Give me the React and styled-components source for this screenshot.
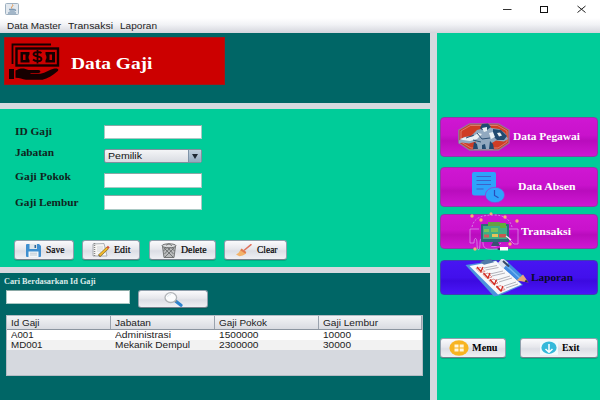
import React, { useLayoutEffect, useRef } from "react";
import styled, { createGlobalStyle } from "styled-components";

const Global = createGlobalStyle`
  * { box-sizing: border-box; }
  body { margin: 0; background: #fff; overflow: hidden; }
  svg { display: block; flex: none; }
`;

const serif = '"Liberation Serif", serif';
const sans = '"Liberation Sans", sans-serif';

/* ---------- text ---------- */
const Slot = styled.span`
  display: block;
  flex: none;
  width: ${(p) => p.$w}px;
  text-align: left;
  white-space: nowrap;
`;
const Glyphs = styled.span`
  display: inline-block;
  vertical-align: top;
  transform-origin: 0 50%;
`;

/* Stretches its text horizontally to the given width. */
function Text({ w, children, ...rest }) {
  const ref = useRef(null);
  useLayoutEffect(() => {
    const el = ref.current;
    const natural = parseFloat(getComputedStyle(el).width);
    el.style.transform = `scaleX(${w / natural})`;
  }, [w, children]);
  return (
    <Slot $w={w} {...rest}>
      <Glyphs ref={ref}>{children}</Glyphs>
    </Slot>
  );
}

/* ---------- frame ---------- */
const Window = styled.div`
  width: 600px;
  height: 400px;
  display: flex;
  flex-direction: column;
  background: #fff;
`;
const TitleBar = styled.header`
  height: 18px;
  display: flex;
  align-items: center;
  padding: 0 14px 0 5px;
`;
const WindowControls = styled.div`
  margin-left: auto;
  display: flex;
  align-items: center;
  gap: 28px;
`;
const MenuBar = styled.nav`
  height: 15px;
  display: flex;
  gap: 7px;
  padding: 1px 0 0 7px;
  font: 9px/15px ${sans};
  color: #222;
  background: linear-gradient(#fff, #f1f2f5 45%, #d3d5dc);
`;
const Body = styled.main`
  flex: 1;
  display: grid;
  grid-template-columns: 430px 163px;
  column-gap: 7px;
  background: #d6d9df;
`;
const Main = styled.div`
  display: grid;
  grid-template-rows: 70px 158px 127px;
  row-gap: 6px;
`;
const HeaderPanel = styled.section`
  background: #006666;
  padding: 4px 0 0 4px;
`;
const Banner = styled.div`
  width: 221px;
  height: 48px;
  display: flex;
  align-items: center;
  padding-left: 4px;
  background: #cc0000;
  border: 1px solid #a31616;
`;
const BannerTitle = styled(Text)`
  font: bold 16.5px/20px ${serif};
  color: #fff;
  margin: 5px 0 0 10.5px;
`;

/* ---------- form ---------- */
const FormPanel = styled.section`
  background: #00cc99;
  padding: 16px 0 0 15px;
`;
const Field = styled.label`
  display: flex;
  align-items: flex-start;
  height: ${(p) => p.$h}px;
`;
const FieldName = styled.span`
  width: 89px;
  margin-top: ${(p) => p.$top}px;
  font: bold 10px/12px ${serif};
  color: #10241d;
`;
const Input = styled.div`
  width: ${(p) => p.$w}px;
  height: ${(p) => p.$h}px;
  background: #fff;
  border: 1px solid #a9c9c4;
  border-top-color: #8aa8a5;
`;
const Combo = styled.div`
  width: 98px;
  height: 14px;
  display: flex;
  justify-content: space-between;
  padding-left: 3px;
  border: 1px solid #80909e;
  border-radius: 2px;
  background: linear-gradient(#f4f5f7, #d9dce2);
  font: 9px/13px ${sans};
  color: #111;
  overflow: hidden;
`;
const ComboArrow = styled.span`
  width: 13px;
  height: 12px;
  display: flex;
  align-items: center;
  justify-content: center;
  border-left: 1px solid #7e93a8;
  background: linear-gradient(#c1d0de, #93aabf);
`;
const Actions = styled.div`
  display: flex;
  margin: 31px 0 0 -1px;
`;

/* ---------- buttons ---------- */
const Button = styled.button`
  flex: none;
  display: flex;
  align-items: center;
  width: ${(p) => p.$w}px;
  height: ${(p) => p.$h || 20}px;
  margin: 0 ${(p) => p.$after || 0}px 0 0;
  padding: 0 0 0 ${(p) => p.$pad}px;
  border: 1px solid #8f9fac;
  border-bottom-color: #76808c;
  border-radius: 3px;
  background: linear-gradient(#fafafc, #e6e7ec 45%, #dcdee5 55%, #eff0f4);
  box-shadow: 0 1px 0 rgba(0, 70, 60, 0.25);
  font: ${(p) => (p.$bold ? "bold " : "")}10px/12px ${serif};
  color: #000;
`;
const ButtonText = styled(Text)`
  margin-left: ${(p) => p.$gap}px;
`;
const ActionText = styled(ButtonText)`
  -webkit-text-stroke: 0.2px #000;
`;

/* ---------- search & table ---------- */
const SearchPanel = styled.section`
  background: #006666;
  padding: 3px 0 0 4px;
`;
const SearchTitle = styled(Text)`
  font: bold 7.5px/11px ${serif};
  color: #dcebea;
`;
const SearchRow = styled.div`
  display: flex;
  gap: 8px;
  margin: 3px 0 0 2px;
`;
const Table = styled.div`
  width: 417px;
  height: 61px;
  margin: 7px 0 0 2px;
  border: 1px solid #b4bcc4;
  background: #d6d9df;
  font: 9px/11px ${sans};
  color: #1c1c1c;
`;
const TableRow = styled.div`
  display: grid;
  grid-template-columns: 104px 104px 104px 103px;
  height: 10px;
  background: ${(p) => (p.$alt ? "#f2f2f2" : "#fff")};
`;
const TableHead = styled(TableRow)`
  height: 14px;
  line-height: 15px;
  background: linear-gradient(#f3f4f6, #d9dbe1);
  border-bottom: 1px solid #8c95a0;
`;
const Cell = styled.div`
  height: 100%;
  padding-left: 4px;
`;
const HeadCell = styled(Cell)`
  height: 13px;
  border-right: 1px solid #9aa2ad;
`;

/* ---------- side navigation ---------- */
const Side = styled.aside`
  background: #00cc99;
  padding: 84px 0 0 2.5px;
`;
const NavButton = styled.button`
  display: flex;
  align-items: center;
  width: 158.5px;
  height: ${(p) => p.$h}px;
  margin: 0 0 ${(p) => p.$after}px;
  padding: 0 0 0 ${(p) => p.$pad}px;
  border: 1px solid ${(p) => (p.$blue ? "#3d3fb0" : "#8d3aa6")};
  border-radius: 4px;
  background: ${(p) =>
    p.$blue
      ? "linear-gradient(#4715f2, #4210ec 50%, #3c0ae0 60%, #4a16f8)"
      : "linear-gradient(#cf17d2, #c912cc 45%, #b90cbd 60%, #cf17d3)"};
  font: bold 10px/12px ${serif};
  color: ${(p) => (p.$blue ? "#0b0a2c" : "#fff")};
`;
const FootRow = styled.div`
  display: flex;
`;

/* ---------- drawings ---------- */
const JavaIcon = () => (
  <svg width="14" height="12" viewBox="0 0 14 12">
    <rect x="0.5" y="0.5" width="13" height="11" rx="1" fill="#e3e9ef" stroke="#9fb1c1" />
    <path d="M7.5 1.5c1.5 1.500-2 2-.7 4" stroke="#e08a3c" fill="none" />
    <path d="M4 6.300h5.500M4.500 8h4.500M3 10h8M9.500 6.500c2 0 1.500 1.500-.5 1.500" stroke="#56789a" fill="none" strokeWidth=".9" />
  </svg>
);
const MoneyHand = () => (
  <svg width="51" height="38" viewBox="0 0 51 38">
    <g fill="none" stroke="#160000">
      <path d="M3.500 22V2.500H42" strokeWidth="1.800" />
      <rect x="7.500" y="6.500" width="41.500" height="17" strokeWidth="2.400" />
    </g>
    <g fill="#160000">
      <path d="M11.500 10h9v2.200q-2 3 0 6v2.300h-9zM14 12.500v5.500h2.500v-5.500zM36.500 10h9.500v10.500h-9.500v-2.300q2-3 0-6zM40.500 12.500v5.500H43v-5.500z" fillRule="evenodd" />
      <rect x="0" y="27" width="5" height="10" />
      <path d="M6.500 28.500c5-3 9-2.500 13-.5h10c2.500 0 2.500 3 0 3h-8v.8h10c5-1 9-4 13-5 4-1 6 .5 4 2.500-5 4-10 7.500-15 8.500H17c-4-.5-6-2-10.500-2z" />
    </g>
    <path d="M32.500 11.200c-2-1.800-8-1.600-8 1.100s8 1.600 8 4.600-6 2.800-8.500.6M28.500 8v13.500" fill="none" stroke="#160000" strokeWidth="1.800" />
  </svg>
);
const Floppy = () => (
  <svg width="15" height="13" viewBox="0 0 15 13">
    <path d="M0 1q0-1 1-1h12l2 2v10q0 1-1 1H1q-1 0-1-1z" fill="#3f8fd0" />
    <path d="M3.500 0h7.500v5H3.500z" fill="#dfe6ea" />
    <path d="M8.500 1h1.600v3H8.500z" fill="#2b6699" />
    <path d="M2.500 7.500h10V13h-10z" fill="#f3f6f8" />
    <path d="M4 9.200h7M4 11h7" stroke="#a9b9c5" strokeWidth=".7" />
  </svg>
);
const Notepad = () => (
  <svg width="18" height="14" viewBox="0 0 18 14">
    <path d="M1 1l11-.5 3 12.500H1z" fill="#f5f5f3" stroke="#99a0a4" strokeWidth=".8" />
    <path d="M2.500 0v13" stroke="#888" strokeDasharray="1 1" strokeWidth="1.500" />
    <path d="M5 4h6M5 6h6M5 8h4" stroke="#c6cbd0" strokeWidth=".7" />
    <path d="M7 13L15.500 5" stroke="#5e5126" strokeWidth="3" />
    <path d="M7.500 12.500L15.500 5" stroke="#f1b92d" strokeWidth="2.200" />
    <path d="M15.300 5.200l1.500-1.500" stroke="#d45439" strokeWidth="2.500" />
  </svg>
);
const Bin = () => (
  <svg width="16" height="15" viewBox="0 0 16 15">
    <path d="M1.500 3.500h13l-1.500 11H3z" fill="#b9bbbc" stroke="#5d5f60" strokeWidth=".8" />
    <path d="M3 5l9 9M6 4l6.500 7M9.500 4l4 4M13 5l-9 9M10 4l-6.500 7M6.500 4l-4 4" stroke="#606365" strokeWidth=".8" />
    <ellipse cx="8" cy="2.800" rx="7" ry="2" fill="#dadcdd" stroke="#5d5f60" strokeWidth=".9" />
    <path d="M5 2.300l3-1.500 3 2" stroke="#666" fill="none" strokeWidth=".8" />
  </svg>
);
const Broom = () => (
  <svg width="16" height="13" viewBox="0 0 16 13">
    <path d="M8.500 6L15 .7" stroke="#e0705a" strokeWidth="1.500" strokeLinecap="round" />
    <path d="M4.500 6l5.500 3.500Q7.500 12 3.500 12.200L0 10.500Q3 9 4.500 6z" fill="#f3b36b" />
    <path d="M5.500 4.500l4.800 3.400-.8 1.800L4.200 6.200z" fill="#e27a4c" />
  </svg>
);
const Magnifier = () => (
  <svg width="19" height="15" viewBox="0 0 19 15">
    <path d="M11.500 9L17 13.300" stroke="#2d83cf" strokeWidth="3.200" strokeLinecap="round" />
    <path d="M10.500 8.500l2 1.500" stroke="#888" strokeWidth="1.500" />
    <ellipse cx="6.800" cy="5.600" rx="5.800" ry="4.900" fill="#fbfcfd" stroke="#b0b4b8" strokeWidth="1.300" />
    <path d="M3.500 5c.5-1.800 2-2.500 3.500-2.500" stroke="#dde6ee" fill="none" />
  </svg>
);
const Mechanic = () => (
  <svg width="52" height="28" viewBox="0 0 52 28">
    <path d="M11.500 .8h29L51 7v13l-10.500 7h-29L.8 20V7z" fill="#cf3d25" stroke="#8f7d96" strokeWidth="1.300" />
    <path d="M12.500 2.500h27L49 8v11l-9 6H13l-10-6V8z" fill="none" stroke="#e9b9ac" strokeWidth=".5" />
    <path d="M1 17.500l5-3.500 7-1 6-6 4-1 1-4 6-1 3 4 8 1 6 4 3 6-4 2.500-8-1-5 3 2 6h-19l2-8-7 2-7-1-3 1z" fill="#91a9c0" />
    <path d="M22 5l2-4 6-.5 3 3.500-4 3h-5zM35 6l8 1 6 6-3 4-7 0-4-4z" fill="#204a70" />
    <path d="M15 26l1-7 3 2 1 5zM24 26v-4l3-1 1 5zM31 26l1-8 3 3 1 5z" fill="#204a70" />
    <path d="M2 16l6-2h6l6-4 4 1-5 5-7 2-7-1zM24 5l5-1v4l-3 1zM31 10l4-1 2 5-4 2zM39 10l3-.5 2 3-3 1z" fill="#e9f1f4" />
    <path d="M19 10l5 6 8-1M15 17l8 2M8 15l8-3" stroke="#2c5174" fill="none" strokeWidth="1" />
  </svg>
);
const SheetClock = () => (
  <svg width="33" height="31" viewBox="0 0 33 31">
    <path d="M2 0h20q2 0 2 2v14q-8 .5-10 7.500H2.500q-2.500 0-2.500-2.500V2q0-2 2-2z" fill="#2ea3fb" />
    <path d="M4.500 4.500h14.500M4.500 8.500h14.500M4.500 12.500h14.500M4.500 17h7" stroke="#3c62c8" strokeWidth="1.100" />
    <ellipse cx="23" cy="23" rx="9.600" ry="7.700" fill="#2ea3fb" stroke="#a42fd0" strokeWidth=".7" />
    <path d="M22.500 18v5.500l4 2.300" stroke="#2a4cba" strokeWidth="1.200" fill="none" />
  </svg>
);
const Desktop = () => (
  <svg width="50" height="40" viewBox="0 0 50 40">
    <g fill="none" stroke="#d795e6" strokeWidth=".8">
      <path d="M3 15C5 5 14 3 25 3s16 5 18 12" strokeDasharray="2 1.500" />
      <path d="M10 17H1v14h4c0-6 3-6 3 0 0 9 3 9 3 0 0-6 3-6 3 0 0 8 8 6 14 6" />
      <path d="M40 17h9v15h-4l-5-5M22 34q5 2 10-3" />
    </g>
    <rect x="12" y="12" width="28" height="18" rx="1" fill="#2b6b78" />
    <rect x="14" y="14" width="24" height="13" fill="#3fae84" />
    <rect x="19" y="10" width="12" height="4" fill="#66a044" />
    <path d="M15 17h5v3h-5zM22 16h7v4h-7z" fill="#7cc15b" />
    <path d="M15 22.500h5v3h-5z" fill="#d0585f" />
    <path d="M23 22h6v3h-6z" fill="#e7c25a" />
    <path d="M30 22h7v3.500h-7z" fill="#c8574f" />
    <path d="M31 11h6v5h-6z" fill="#5fae3c" />
    <path d="M24 30h5l2 4h-9z" fill="#3b4f73" />
    <path d="M37 24l5 4" stroke="#f7e8f5" strokeWidth="1.300" />
    <g fill="#f3b177">
      <circle cx="3" cy="4" r="1.700" /><circle cx="12" cy="8" r="1.700" /><circle cx="22" cy="1.700" r="1.500" />
      <circle cx="36" cy="5" r="1.700" /><circle cx="48" cy="9" r="1.700" /><circle cx="41" cy="32" r="1.700" /><circle cx="6" cy="37" r="1.700" />
    </g>
    <path d="M31 35h8v3.500h-8z" fill="#fff" /><path d="M29 36h2v2h-2z" fill="#47306c" />
  </svg>
);
const Checklist = () => (
  <svg width="64" height="38" viewBox="0 0 64 38">
    <path d="M.5 6L31 1.500 58 26 34 36.500l-5 1z" fill="#4c93dd" />
    <path d="M4.500 7L31 2l25.500 23.500L33 35.500z" fill="#f7f8fa" />
    <path d="M15 3l5-2 6-.7 3 3-10 2.500z" fill="#4f79a8" />
    <g stroke="#9fa1aa" strokeWidth=".8">
      <path d="M19 9l13-2.500M20.500 11l13-2.500M25 15l13-3M27 17l13-3M32 21l13-4M34 23l13-4M39 27l12-4M41 29l12-4" />
    </g>
    <g fill="none" stroke="#d77a76" strokeWidth=".8">
      <path d="M11 9.500l5-1 4 4-5 1zM18 15.500l5-1.500 4 4-5 1.500zM24 21.500l5-1.500 4 4-5 1.500zM31 28l5-1.500 4 4-5 1.500z" />
    </g>
    <g fill="none" stroke="#d2281f" strokeWidth="1.300">
      <path d="M12 8l4 4.500L18 8M18.500 14l4.500 5 2-5M25 20.500l4.500 5 2-5M31.500 27l4.500 5 2-5" />
    </g>
    <path d="M37 2.500L55 19" stroke="#3f8ee0" strokeWidth="7" />
    <path d="M41 6.200L57 21" stroke="#74b4f2" strokeWidth="1.500" />
    <path d="M35 1.500L41 6.500" stroke="#dce4ee" strokeWidth="7" />
    <path d="M38 2l6 5.500" stroke="#354866" strokeWidth="2" />
    <path d="M51.500 21.500L58 15.500l5.500 8z" fill="#e8a878" />
    <path d="M61 20.500l2.500 3-4-.8z" fill="#343038" />
  </svg>
);
const MenuDisc = () => (
  <svg width="20" height="16" viewBox="0 0 20 16">
    <ellipse cx="10" cy="8" rx="9.600" ry="7.700" fill="#f7b421" />
    <path d="M5.500 4.500h4v3h-4zM10.700 4.500h4v3h-4zM5.500 8.500h4v3h-4zM10.700 8.500h4v3h-4z" fill="#fff6dc" />
  </svg>
);
const ExitDisc = () => (
  <svg width="18" height="14" viewBox="0 0 18 14">
    <rect width="18" height="14" fill="#f0fafc" />
    <ellipse cx="9" cy="6.700" rx="7.600" ry="6.200" fill="#35b9da" />
    <path d="M9 3v8M5.500 8L9 11.300 12.500 8" stroke="#fff" strokeWidth="1.500" fill="none" />
  </svg>
);

const columns = [
  ["Id Gaji", 28.5],
  ["Jabatan", 36],
  ["Gaji Pokok", 48],
  ["Gaji Lembur", 55],
];
const rows = [
  [["A001", 22.5], ["Administrasi", 56], ["1500000", 39.5], ["10000", 28]],
  [["MD001", 31.5], ["Mekanik Dempul", 75], ["2300000", 39.5], ["30000", 28]],
];

export default function App() {
  return (
    <Window>
      <Global />
      <TitleBar>
        <JavaIcon />
        <WindowControls>
          <svg width="9" height="9"><path d="M0 4.500h8.500" stroke="#333" /></svg>
          <svg width="9" height="9"><rect x=".5" y="1.500" width="7" height="6" fill="none" stroke="#111" /></svg>
          <svg width="9" height="9"><path d="M.5 1l8 6.500M8.500 1l-8 6.500" stroke="#222" /></svg>
        </WindowControls>
      </TitleBar>
      <MenuBar>
        <Text w={54}>Data Master</Text>
        <Text w={45}>Transaksi</Text>
        <Text w={37}>Laporan</Text>
      </MenuBar>
      <Body>
        <Main>
          <HeaderPanel>
            <Banner>
              <MoneyHand />
              <BannerTitle w={81.5}>Data Gaji</BannerTitle>
            </Banner>
          </HeaderPanel>
          <FormPanel>
            <Field $h={24}>
              <FieldName $top={1}><Text w={37}>ID Gaji</Text></FieldName>
              <Input $w={98} $h={14} />
            </Field>
            <Field $h={24}>
              <FieldName $top={-2}><Text w={39}>Jabatan</Text></FieldName>
              <Combo>
                <Text w={34}>Pemilik</Text>
                <ComboArrow>
                  <svg width="6" height="5"><path d="M0 0h6L3 5z" fill="#1d2833" /></svg>
                </ComboArrow>
              </Combo>
            </Field>
            <Field $h={22}>
              <FieldName $top={-2}><Text w={56}>Gaji Pokok</Text></FieldName>
              <Input $w={98} $h={15} />
            </Field>
            <Field $h={14}>
              <FieldName $top={2}><Text w={63.5}>Gaji Lembur</Text></FieldName>
              <Input $w={98} $h={15} />
            </Field>
            <Actions>
              <Button $w={60} $pad={10.5} $after={8}><Floppy /><ActionText $gap={5.5} w={18.5}>Save</ActionText></Button>
              <Button $w={58} $pad={9} $after={9}><Notepad /><ActionText $gap={4} w={16.5}>Edit</ActionText></Button>
              <Button $w={67} $pad={10.5} $after={8}><Bin /><ActionText $gap={4.5} w={25.5}>Delete</ActionText></Button>
              <Button $w={63} $pad={11}><Broom /><ActionText $gap={4.5} w={20.5}>Clear</ActionText></Button>
            </Actions>
          </FormPanel>
          <SearchPanel>
            <SearchTitle w={91.5}>Cari Berdasarkan Id Gaji</SearchTitle>
            <SearchRow>
              <Input $w={124} $h={14} />
              <Button $w={70} $h={18} $pad={24.5}><Magnifier /></Button>
            </SearchRow>
            <Table>
              <TableHead>
                {columns.map(([t, w]) => <HeadCell key={t}><Text w={w}>{t}</Text></HeadCell>)}
              </TableHead>
              {rows.map((row, i) => (
                <TableRow key={i} $alt={i % 2 === 1}>
                  {row.map(([t, w]) => <Cell key={t}><Text w={w}>{t}</Text></Cell>)}
                </TableRow>
              ))}
            </Table>
          </SearchPanel>
        </Main>
        <Side>
          <NavButton $h={40} $after={10} $pad={17}><Mechanic /><ButtonText $gap={3.5} w={67}>Data Pegawai</ButtonText></NavButton>
          <NavButton $h={40} $after={7} $pad={31.5}><SheetClock /><ButtonText $gap={13} w={57.5}>Data Absen</ButtonText></NavButton>
          <NavButton $h={35} $after={11} $pad={28}><Desktop /><ButtonText $gap={2.5} w={50}>Transaksi</ButtonText></NavButton>
          <NavButton $h={35} $after={43} $pad={24.5} $blue><Checklist /><ButtonText $gap={2} w={42}>Laporan</ButtonText></NavButton>
          <FootRow>
            <Button $w={66.5} $pad={8.5} $after={13.5} $bold><MenuDisc /><ButtonText $gap={2.5} w={25.5}>Menu</ButtonText></Button>
            <Button $w={78.5} $pad={19.5} $bold><ExitDisc /><ButtonText $gap={3.5} w={17.5}>Exit</ButtonText></Button>
          </FootRow>
        </Side>
      </Body>
    </Window>
  );
}
